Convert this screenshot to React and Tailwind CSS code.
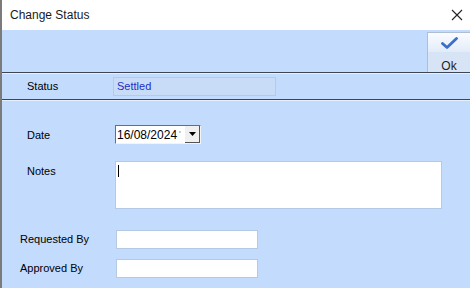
export default function App() {
  return (
    <div
      className="w-[470px] h-[288px] overflow-hidden bg-[#c3dbfd] border-l-2 border-[#7b7b7b] flex flex-col text-[11px] text-black"
      style={{ fontFamily: '"Liberation Sans", Arial, sans-serif' }}
    >
      {/* title bar */}
      <div className="h-[30px] shrink-0 bg-white flex items-center justify-between pl-[8px] pr-[6px]">
        <span className="text-[12px] text-[#1a1a1a]">Change Status</span>
        <svg width="12" height="12" viewBox="0 0 12 12" className="mr-[1px]">
          <path d="M1 1 L11 11 M11 1 L1 11" stroke="#222" strokeWidth="1.1" fill="none" />
        </svg>
      </div>

      {/* toolbar */}
      <div className="h-[42px] shrink-0 flex justify-end pt-[2px]">
        <div className="w-[43px] h-[40px] border-l border-t border-[#aebed4] flex flex-col overflow-hidden">
          <div className="h-[22px] bg-gradient-to-b from-[#fafcff] to-[#e2ecf8] flex items-center justify-center">
            <svg width="17" height="12" viewBox="0 0 17 12">
              <path d="M1.5 6.5 L6 10.5 L15.5 1.5" stroke="#3b6fc6" strokeWidth="2.8" fill="none" strokeLinecap="round" strokeLinejoin="round" />
            </svg>
          </div>
          <div className="flex-1 bg-[#d6e4f6] flex justify-center pt-[8px] text-[12px] leading-none text-[#222]">Ok</div>
        </div>
      </div>

      <div className="h-px shrink-0 bg-[#3d4754]" />
      <div className="h-px shrink-0 bg-[#e6f0fd]" />

      {/* status row */}
      <div className="h-[25px] shrink-0 flex items-center">
        <span className="w-[111px] pl-[25px]">Status</span>
        <div className="w-[163px] h-[19px] bg-[#c8dcf7] border border-[#b5cae6] flex items-center pl-[3px] text-[#1f2fc4]">
          Settled
        </div>
      </div>

      <div className="h-px shrink-0 bg-[#3d4754]" />
      <div className="h-px shrink-0 bg-[#e6f0fd]" />

      {/* form */}
      <div className="flex flex-col pt-[24px]">
        <div className="flex items-center h-[19px]">
          <span className="w-[113px] pl-[25px] pt-[1px]">Date</span>
          <div className="w-[86px] h-[19px] bg-white border-t border-l border-[#6e6e6e] border-r border-b border-r-[#f4f4f4] border-b-[#f4f4f4] flex items-center overflow-hidden">
            <span className="text-[12px] pl-[1px] leading-none">16/08/2024</span>
            <span className="text-[9px] text-[#777] pl-[2px] leading-none">'</span>
            <div className="ml-auto w-[15px] h-full bg-[#f0f0f0] border-r border-b border-[#555] flex items-center justify-center">
              <svg width="7" height="4" viewBox="0 0 7 4">
                <path d="M0 0 H7 L3.5 4 Z" fill="#000" />
              </svg>
            </div>
          </div>
        </div>

        <div className="flex mt-[17px]">
          <span className="w-[113px] pl-[25px] pt-[2px]">Notes</span>
          <div className="w-[327px] h-[48px] bg-white border border-[#b4c9e4] pl-[2px] pt-[3px]">
            <div className="w-px h-[12px] bg-black" />
          </div>
        </div>

        <div className="flex items-center mt-[21px]">
          <span className="w-[114px] pl-[18px]">Requested By</span>
          <div className="w-[142px] h-[19px] bg-white border border-[#b4c9e4]" />
        </div>

        <div className="flex items-center mt-[10px]">
          <span className="w-[114px] pl-[18px]">Approved By</span>
          <div className="w-[142px] h-[19px] bg-white border border-[#b4c9e4]" />
        </div>
      </div>
    </div>
  );
}
